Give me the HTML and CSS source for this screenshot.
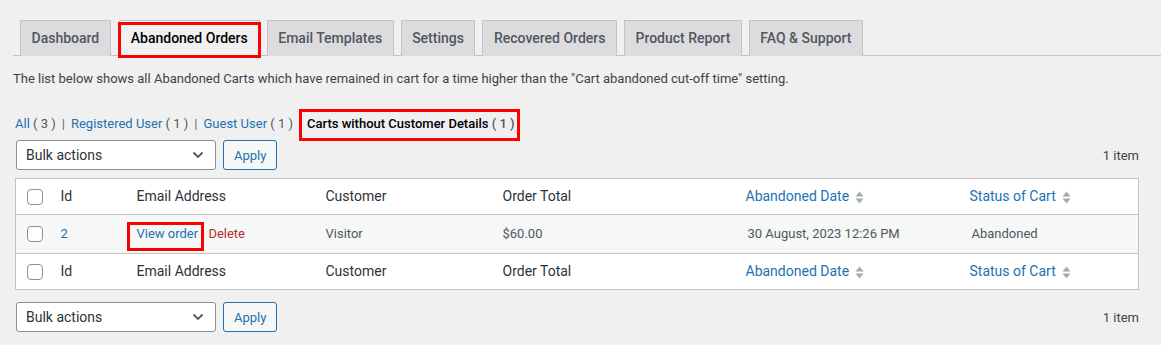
FILE: index.html
```html
<!DOCTYPE html>
<html lang="en">
<head>
    <meta charset="UTF-8">
    <meta name="viewport" content="width=device-width, initial-scale=1.0">
    <title>Abandoned Orders</title>
    <link rel="stylesheet" href="styles.css">
</head>
<body>
    <nav class="tabs">
        <a class="tab">Dashboard</a>
        <a class="tab active marked">Abandoned Orders</a>
        <a class="tab">Email Templates</a>
        <a class="tab">Settings</a>
        <a class="tab">Recovered Orders</a>
        <a class="tab">Product Report</a>
        <a class="tab">FAQ &amp; Support</a>
    </nav>

    <div class="content">
        <p class="desc">The list below shows all Abandoned Carts which have remained in cart for a time higher than the "Cart abandoned cut-off time" setting.</p>

        <ul class="filters">
            <li><a>All <span class="count">( 3 )</span></a><span class="sep">|</span></li>
            <li><a>Registered User <span class="count">( 1 )</span></a><span class="sep">|</span></li>
            <li><a>Guest User <span class="count">( 1 )</span></a></li>
            <li><a class="current marked-filter">Carts without Customer Details <span class="count">( 1 )</span></a></li>
        </ul>

        <div class="tablenav">
            <div class="actions">
                <div class="select">
                    <select><option>Bulk actions</option></select>
                    <svg class="chev" width="12" height="8" viewBox="0 0 12 8"><path d="M1.5 1.5 L6 6 L10.5 1.5" fill="none" stroke="#50575e" stroke-width="1.8"/></svg>
                </div>
                <button class="apply">Apply</button>
            </div>
            <div class="num">1 item</div>
        </div>

        <table class="list">
            <colgroup>
                <col class="c-cb"><col class="c-id"><col class="c-email"><col class="c-cust"><col class="c-total"><col class="c-date"><col>
            </colgroup>
            <thead>
                <tr>
                    <th class="cb"><span class="check"></span></th>
                    <th>Id</th>
                    <th>Email Address</th>
                    <th>Customer</th>
                    <th>Order Total</th>
                    <th><a class="sort">Abandoned Date <svg width="9" height="13" viewBox="0 0 9 13"><path d="M0.5 5.5 L4.5 0.5 L8.5 5.5 Z" fill="#a7aaad"/><path d="M0.5 7.5 L4.5 12.5 L8.5 7.5 Z" fill="#a7aaad"/></svg></a></th>
                    <th><a class="sort">Status of Cart <svg width="9" height="13" viewBox="0 0 9 13"><path d="M0.5 5.5 L4.5 0.5 L8.5 5.5 Z" fill="#a7aaad"/><path d="M0.5 7.5 L4.5 12.5 L8.5 7.5 Z" fill="#a7aaad"/></svg></a></th>
                </tr>
            </thead>
            <tbody>
                <tr>
                    <td class="cb"><span class="check"></span></td>
                    <td class="blue">2</td>
                    <td><a class="view marked-view">View order</a> <a class="delete">Delete</a></td>
                    <td>Visitor</td>
                    <td>$60.00</td>
                    <td class="date">30 August, 2023 12:26 PM</td>
                    <td class="status">Abandoned</td>
                </tr>
            </tbody>
            <tfoot>
                <tr>
                    <th class="cb"><span class="check"></span></th>
                    <th>Id</th>
                    <th>Email Address</th>
                    <th>Customer</th>
                    <th>Order Total</th>
                    <th><a class="sort">Abandoned Date <svg width="9" height="13" viewBox="0 0 9 13"><path d="M0.5 5.5 L4.5 0.5 L8.5 5.5 Z" fill="#a7aaad"/><path d="M0.5 7.5 L4.5 12.5 L8.5 7.5 Z" fill="#a7aaad"/></svg></a></th>
                    <th><a class="sort">Status of Cart <svg width="9" height="13" viewBox="0 0 9 13"><path d="M0.5 5.5 L4.5 0.5 L8.5 5.5 Z" fill="#a7aaad"/><path d="M0.5 7.5 L4.5 12.5 L8.5 7.5 Z" fill="#a7aaad"/></svg></a></th>
                </tr>
            </tfoot>
        </table>

        <div class="tablenav bottom">
            <div class="actions">
                <div class="select">
                    <select><option>Bulk actions</option></select>
                    <svg class="chev" width="12" height="8" viewBox="0 0 12 8"><path d="M1.5 1.5 L6 6 L10.5 1.5" fill="none" stroke="#50575e" stroke-width="1.8"/></svg>
                </div>
                <button class="apply">Apply</button>
            </div>
            <div class="num">1 item</div>
        </div>
    </div>
</body>
</html>
```

FILE: styles.css
```css
* {
    box-sizing: border-box;
}
body {
    margin: 0;
    background: #f0f0f1;
    font-family: Roboto, "Liberation Sans", sans-serif;
    font-size: 13px;
    color: #3c434a;
}
a {
    color: #2271b1;
    text-decoration: none;
}

/* tabs */
.tabs {
    display: flex;
    margin-left: 13px;
    padding-top: 20px;
    border-bottom: 1px solid #c3c4c7;
}
.tab {
    margin-left: 7px;
    margin-bottom: -1px;
    padding: 5px 10.5px;
    font-size: 14px;
    font-weight: 500;
    line-height: 24px;
    color: #50575e;
    background: #dcdcde;
    border: 1px solid #c3c4c7;
    border-bottom: none;
}
.tab.active {
    margin-left: 8px;
    padding: 5px 11px;
    color: #000;
    background: #f0f0f1;
    border-bottom: 1px solid #f0f0f1;
}
.marked {
    position: relative;
}
.marked::after {
    content: "";
    position: absolute;
    top: 1px;
    left: -2px;
    right: -2px;
    bottom: -3px;
    border: 3px solid #f00;
}

.content {
    padding: 0 22px 0 15px;
}
.desc {
    margin: 13px 0 0 -2px;
    line-height: 20px;
}

/* filter links */
.filters {
    list-style: none;
    margin: 25px 0 0;
    padding: 0;
    display: flex;
    line-height: 20px;
    color: #646970;
}
.filters .count {
    color: #50575e;
}
.sep {
    margin: 0 6px;
}
.filters .current {
    color: #000;
    font-weight: 500;
    margin-left: 14px;
}
.marked-filter {
    position: relative;
}
.marked-filter::after {
    content: "";
    position: absolute;
    top: -7px;
    left: -8px;
    right: -5px;
    bottom: -10px;
    border: 3px solid #f00;
}

/* tablenav */
.tablenav {
    display: flex;
    justify-content: space-between;
    align-items: center;
    margin-top: 6px;
    padding-left: 1px;
}
.tablenav.bottom {
    margin-top: 12px;
}
.actions {
    display: flex;
    gap: 7px;
}
.select {
    position: relative;
    width: 200px;
}
.select select {
    appearance: none;
    width: 100%;
    height: 30px;
    padding: 0 24px 0 9px;
    font-family: inherit;
    font-size: 14px;
    color: #2c3338;
    background: #fff;
    border: 1px solid #8c8f94;
    border-radius: 3px;
}
.chev {
    position: absolute;
    right: 12px;
    top: 11px;
}
.apply {
    height: 30px;
    padding: 0 10px;
    font-family: inherit;
    font-size: 13px;
    color: #2271b1;
    background: #f6f7f7;
    border: 1px solid #2271b1;
    border-radius: 3px;
}
.num {
    color: #3c434a;
}

/* table */
.list {
    width: 100%;
    margin-top: 8px;
    border-collapse: collapse;
    table-layout: fixed;
    background: #fff;
    border: 1px solid #c3c4c7;
}
.c-cb { width: 35px; }
.c-id { width: 76px; }
.c-email { width: 189px; }
.c-cust { width: 177px; }
.c-total { width: 243px; }
.c-date { width: 224px; }
.list th {
    text-align: left;
    font-weight: 400;
    font-size: 14px;
    color: #2c3338;
    padding: 8px 10px;
    line-height: 19px;
}
.list thead tr {
    border-bottom: 1px solid #c3c4c7;
}
.list tfoot tr {
    border-top: 1px solid #c3c4c7;
}
.list td {
    padding: 9px 10px;
    line-height: 20px;
    color: #50575e;
}
.list tbody tr {
    background: #f6f7f7;
}
.list .cb {
    padding: 0 0 0 11px;
    vertical-align: middle;
}
.check {
    display: block;
    width: 16px;
    height: 16px;
    background: #fff;
    border: 1px solid #8c8f94;
    border-radius: 4px;
}
.sort {
    display: inline-flex;
    align-items: center;
    gap: 6px;
}
.sort svg {
    margin-top: 2px;
}
.list td.blue {
    color: #2271b1;
}
.view {
    position: relative;
}
.marked-view::after {
    content: "";
    position: absolute;
    top: -4px;
    left: -10px;
    right: -6px;
    bottom: -10px;
    border: 3px solid #f00;
}
.delete {
    color: #b32d2e;
    margin-left: 7px;
}
.list td.date,
.list td.status {
    padding-left: 12px;
}
```
